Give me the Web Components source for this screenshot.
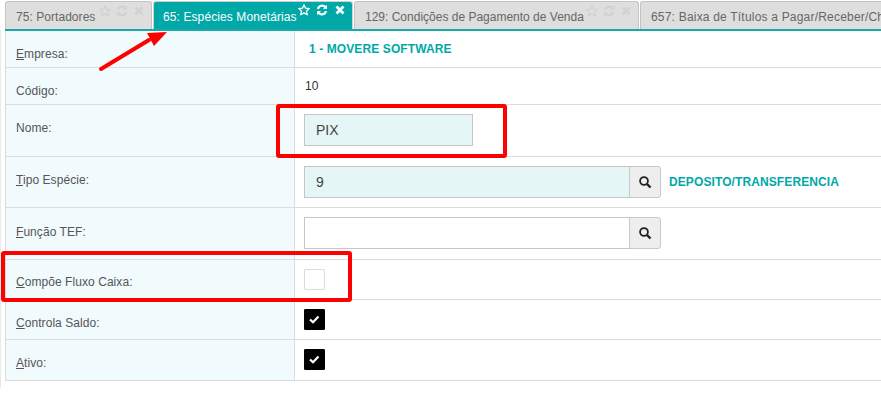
<!DOCTYPE html>
<html><head><meta charset="utf-8"><style>
html,body{margin:0;padding:0;background:#fff;overflow:hidden;height:416px}
body{font-family:"Liberation Sans",Arial,sans-serif}
</style></head><body>
<app-screen>
<tab-bar>
<tab-item w="147">75: Portadores</tab-item>
<tab-item w="200" ls=".1" active>65: Espécies Monetárias</tab-item>
<tab-item w="285" ls="0">129: Condições de Pagamento de Venda</tab-item>
<tab-item w="300" ls=".2" noicons>657: Baixa de Títulos a Pagar/Receber/Cheques</tab-item>
</tab-bar>
<form-table>
<form-row h="37" k="E" label="mpresa:"><span style="color:#00a8a8;font-weight:bold;font-size:12px;margin:11px 0 0 5px;letter-spacing:.1px">1 - MOVERE SOFTWARE</span></form-row>
<form-row h="37" label="Código:"><span style="font-size:12px;color:#333;margin:11px 0 0 1px">10</span></form-row>
<form-row h="52" label="Nome:"><text-box w="169" filled pad>PIX</text-box></form-row>
<form-row h="51" k="T" label="ipo Espécie:"><text-box w="326" filled btn pad>9</text-box><span style="color:#00a8a8;font-weight:bold;font-size:12px;margin:18px 0 0 8px;letter-spacing:.1px">DEPOSITO/TRANSFERENCIA</span></form-row>
<form-row h="52" k="F" top="17" label="unção TEF:"><text-box w="326" btn></text-box></form-row>
<form-row h="40" k="C" top="15" label="ompõe Fluxo Caixa:"><check-box></check-box></form-row>
<form-row h="40" k="C" label="ontrola Saldo:"><check-box checked></check-box></form-row>
<form-row h="41" k="A" label="tivo:" last><check-box checked></check-box></form-row>
</form-table>
<svg style="position:absolute;left:0;top:0;pointer-events:none" width="881" height="416" fill="none">
<rect x="278" y="106" width="227" height="50" rx="1" stroke="#f00" stroke-width="4"/>
<rect x="3" y="253" width="347" height="47" rx="1" stroke="#f00" stroke-width="4"/>
<path d="M101 69 L149 40" stroke="#f00" stroke-width="4" stroke-linecap="round"/>
<path d="M167 32 L147 33 L154 46 Z" fill="#f00"/>
</svg>
</app-screen>
<script>
const STAR='<path d="M6 .8 7.5 4.2 11.3 4.6 8.5 7.1 9.3 10.8 6 8.9 2.7 10.8 3.500 7.100 .7 4.600 4.500 4.200Z" fill="none" stroke="currentColor" stroke-width="1.300" stroke-linejoin="round"/>';
const REFRESH='<path d="M2 5A4.200 4.200 0 0 1 9.400 3.200" fill="none" stroke="currentColor" stroke-width="2.200"/><path d="M11 .8V5H7Z" fill="currentColor"/><path d="M10 7A4.200 4.200 0 0 1 2.600 8.800" fill="none" stroke="currentColor" stroke-width="2.200"/><path d="M1 11.200V7H5Z" fill="currentColor"/>';
const CLOSE='<path d="M2.500 2.500 9.500 9.500M9.500 2.500 2.500 9.500" stroke="currentColor" stroke-width="2.800"/>';
function el(name,fn){customElements.define(name,class extends HTMLElement{constructor(){super();this.attachShadow({mode:'open'})}connectedCallback(){fn.call(this,this.shadowRoot)}})}
el('app-screen',function(r){r.innerHTML='<style>:host{display:block;width:881px;height:416px;position:relative;overflow:hidden}:host::before{content:"";position:absolute;left:0;top:30px;width:1px;height:358px;background:#e8e8e8}</style><slot></slot>'});
el('tab-bar',function(r){r.innerHTML='<style>:host{display:flex;gap:1px;margin-left:5px;padding-top:1px;height:28px;width:876px;overflow:hidden;box-sizing:content-box;border-bottom:2px solid #19a9a9}</style><slot></slot>'});
el('tab-item',function(r){
 const a=this.hasAttribute('active'),no=this.hasAttribute('noicons'),ls=this.getAttribute('ls')||'.05';
 r.innerHTML=`<style>:host{display:block;flex:none;width:${this.getAttribute('w')}px;height:28px;box-sizing:border-box;position:relative;overflow:hidden;
 background:${a?'#00a8a8':'#dedede'};color:${a?'#fff':'#666'};border:1px solid ${a?'#d0d0d0':'#c4c4c4'};border-bottom:0;border-radius:3px 3px 0 0;font-size:12px;letter-spacing:${ls}px;white-space:nowrap}
 .t{position:absolute;left:${a?9:10}px;top:8px;line-height:14px}
 .i{position:absolute;right:6px;top:${a?2:3}px;display:flex;gap:${a?6:5}px;color:${a?'#fff':'#d2d2d2'}}
 svg{width:12px;height:12px;display:block}</style><span class="t"><slot></slot></span>`+(no?'':`<span class="i"><svg viewBox="0 0 12 12">${STAR}</svg><svg viewBox="0 0 12 12">${REFRESH}</svg><svg viewBox="0 0 12 12">${CLOSE}</svg></span>`);
});
el('form-table',function(r){r.innerHTML='<style>:host{display:block;margin-left:5px;border-left:1px solid #dcdcdc;width:875px}</style><slot></slot>'});
el('form-row',function(r){
 const k=this.getAttribute('k')||'',l=this.getAttribute('label'),t=this.getAttribute('top')||16;
 r.innerHTML=`<style>:host{display:grid;grid-template-columns:289px 1fr;height:${this.getAttribute('h')}px;box-sizing:border-box;border-bottom:1px solid #dcdcdc}
 .l{background:#f1fafc;border-right:1px solid #dcdcdc;font-size:12px;color:#555;padding:${t}px 0 0 10px;line-height:14px;letter-spacing:.06px;white-space:nowrap}
 u{text-decoration:underline}
 .v{display:flex;align-items:flex-start;padding-left:9px;white-space:nowrap}</style>
 <div class="l">${k?`<u>${k}</u>`:''}${l}</div><div class="v"><slot></slot></div>`;
});
el('text-box',function(r){
 const w=+this.getAttribute('w'),b=this.hasAttribute('btn'),f=this.hasAttribute('filled');
 r.innerHTML=`<style>:host{display:flex;flex:none;margin-top:9px;height:32px;width:${w+(b?31:0)}px}
 .i{width:${w}px;height:32px;box-sizing:border-box;border:1px solid #c6c6c6;background:${f?'#e4f6f5':'#fff'};font-size:14px;color:#444;padding:0 11px;line-height:30px}
 .b{width:32px;margin-left:-1px;height:32px;box-sizing:border-box;border:1px solid #c9c9c9;border-radius:0 3px 3px 0;background:#eee;display:flex;align-items:center;justify-content:center}</style>
 <div class="i"><slot></slot></div>`+(b?'<div class="b"><svg width="14" height="14" viewBox="0 0 14 14" fill="none" stroke="#222"><circle cx="6" cy="6" r="3.900" stroke-width="1.800"/><path d="M9 9 12.500 12.500" stroke-width="2.400"/></svg></div>':'');
});
el('check-box',function(r){
 const c=this.hasAttribute('checked');
 r.innerHTML=`<style>:host{display:block;flex:none;margin-top:9px;width:21px;height:21px;box-sizing:border-box;background:${c?'#000':'#fff'};border:1px solid ${c?'#000':'#dcdcdc'};border-radius:1px}svg{display:block}</style>`+(c?'<svg width="19" height="19" viewBox="0 0 19 19" fill="none"><path d="M5 9.500 8 12.300 13.500 6.500" stroke="#fff" stroke-width="2.200"/></svg>':'');
});
</script>
</body></html>
